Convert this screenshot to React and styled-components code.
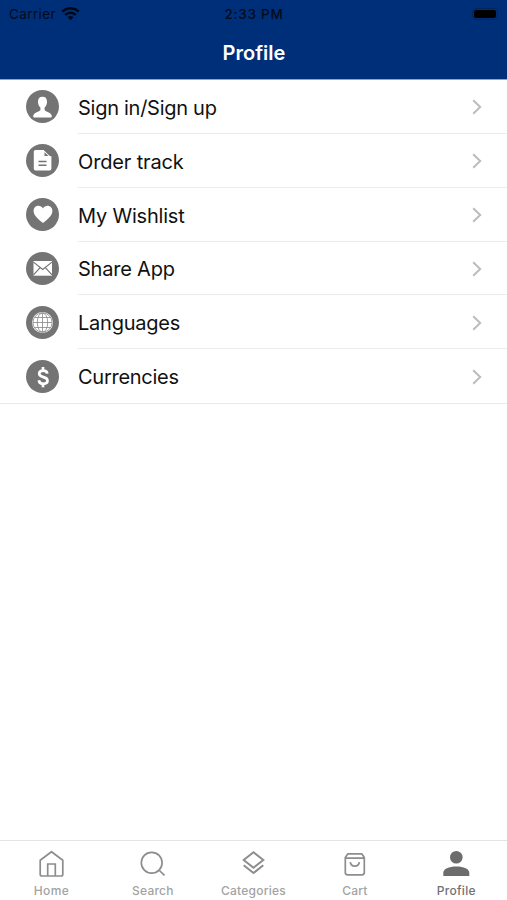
import React from 'react';
import styled, { createGlobalStyle } from 'styled-components';

const GlobalStyle = createGlobalStyle`
  * { box-sizing: border-box; }
  html, body { margin: 0; padding: 0; background: #fff; overflow: hidden; }
  body { font-family: Inter, "Liberation Sans", sans-serif; }
`;

const Screen = styled.div`
  display: flex;
  flex-direction: column;
  width: 100%;
  height: 100vh;
  background: #fff;
`;

const Header = styled.header`
  flex: none;
  height: 80px;
  background: #002f7a;
  border-bottom: 1px solid #8ba4c8;
`;

const StatusBar = styled.div`
  display: grid;
  grid-template-columns: 1fr auto 1fr;
  align-items: center;
  height: 28px;
  padding: 0 9px;
  color: #020b1c;
`;

const Carrier = styled.div`
  display: flex;
  align-items: center;
  gap: 5px;
  font-size: 13.5px;
  line-height: 28px;
  letter-spacing: 0.38px;
`;

const Clock = styled.div`
  font-size: 13.5px;
  font-weight: 500;
  line-height: 28px;
  letter-spacing: 0.72px;
  margin-right: -1px;
`;

const Battery = styled.div`
  justify-self: end;
  width: 26px;
  height: 12px;
  padding: 1px;
  margin-bottom: 1px;
  border: 1px solid #00255f;
  border-radius: 4px;
  &::before {
    content: '';
    display: block;
    width: 22px;
    height: 8px;
    border-radius: 2px;
    background: #000;
  }
`;

const Title = styled.h1`
  margin: 0;
  padding-left: 1px;
  height: 51px;
  line-height: 50px;
  text-align: center;
  color: #fff;
  font-size: 20px;
  font-weight: 600;
`;

const Menu = styled.ul`
  flex: 1;
  margin: 0;
  padding: 0;
  list-style: none;
`;

const MenuRow = styled.li`
  display: flex;
  height: 53.85px;
  padding-left: 26px;
  &:last-child { box-shadow: 0 1px 0 #e9e9e9; }
`;

const Badge = styled.svg`
  flex: none;
  align-self: center;
  width: 33px;
  height: 33px;
  margin-right: 19px;
`;

const RowBody = styled.div`
  flex: 1;
  display: flex;
  align-items: center;
  justify-content: space-between;
  padding: 2px 24px 0 0;
  border-bottom: 1px solid #ececec;
  li:last-child > & { border-color: transparent; }
`;

const RowLabel = styled.span`
  padding-top: 1px;
  color: #111;
  font-size: 20px;
  line-height: 24px;
  letter-spacing: ${(p) => p.$spacing}px;
  white-space: nowrap;
`;

const Chevron = styled.svg`
  width: 11px;
  height: 16px;
  fill: none;
  stroke: #bcbcbe;
  stroke-width: 2;
`;

const TabBar = styled.nav`
  flex: none;
  display: grid;
  grid-template-columns: repeat(5, 1fr);
  height: 60.5px;
  border-top: 1.5px solid #e4e4e4;
`;

const Tab = styled.div`
  display: flex;
  flex-direction: column;
  align-items: center;
  padding-top: 8px;
  color: ${(p) => (p.$active ? '#6c6c6c' : '#8d8d8d')};
`;

const TabIcon = styled.svg`
  width: 30px;
  height: 30px;
  fill: none;
  stroke: currentColor;
  stroke-width: 1.7;
`;

const TabLabel = styled.span`
  margin-top: 4px;
  padding-left: ${(p) => p.$shift || 0}px;
  color: ${(p) => (p.$active ? '#717171' : '#a3a3a3')};
  font-size: 12px;
  font-weight: 500;
  line-height: 16px;
  letter-spacing: ${(p) => p.$spacing}px;
`;

const glyphs = {
  person: (
    <path
      fill="#fff"
      d="M16.500 6.800c-3.100 0-4.600 1.900-4.500 5.100.1 2.500 1 4.300 2.400 5.500v2.700c-.3 1.500-5.600 2.200-7 5.100-.4.900-.2 2.200.6 2.200h17c.8 0 1-1.300.6-2.200-1.400-2.900-6.700-3.600-7-5.100v-2.700c1.400-1.200 2.300-3 2.400-5.500.1-3.200-1.400-5.100-4.500-5.100z"
    />
  ),
  document: (
    <>
      <path fill="#fff" d="M9.500 5.900h8.500v6.300h7.400v12.600q0 1.700-1.700 1.700H9.500q-1.700 0-1.700-1.700V7.600q0-1.700 1.700-1.700z" />
      <path fill="#fff" d="M17.500 5.900l7.900 7.600H17z" />
      <path fill="#747474" d="M18.500 8.200l4 3.900h-4z" />
      <path stroke="#747474" strokeWidth="1.400" d="M12.500 17.500h8M12.500 21.300h8" />
    </>
  ),
  heart: (
    <path
      fill="#fff"
      d="M17 25C13 21.800 7.600 17.600 7.600 12.900c0-3 2-5.100 4.700-5.100 2 0 3.800 1.100 4.700 2.700.9-1.600 2.500-2.700 4.500-2.700 2.700 0 4.900 2.100 4.900 5.100 0 4.700-5.400 8.900-9.400 12.100z"
    />
  ),
  mail: (
    <>
      <path fill="#fff" d="M7.500 9h18.500v14.700H7.500z" />
      <path
        fill="none"
        stroke="#747474"
        strokeWidth="1.200"
        d="M7.500 10.100l9.200 7.300 9.300-7.300M7.500 22.800l6.400-7M26 22.800l-6.400-7"
      />
    </>
  ),
  globe: (
    <>
      <circle cx="16.500" cy="16.500" r="10.500" fill="#fff" />
      <g fill="none" stroke="#868686" strokeWidth="0.800">
        <circle cx="16.500" cy="16.500" r="9.600" />
        <ellipse cx="16.500" cy="16.500" rx="5.200" ry="9.600" />
        <path d="M16.500 7v19M7 16.500h19M8.700 11.500h15.600M8.700 21.500h15.600" />
      </g>
    </>
  ),
  dollar: (
    <path
      fill="none"
      stroke="#fff"
      strokeWidth="2.700"
      d="M17 7v4M17 23.300v4M21.300 13.600c-.3-2-1.800-3-4.100-3-2.400 0-4 1.200-4 3.200 0 4.500 8.300 2.200 8.300 6.700 0 2-1.700 3.300-4.200 3.300s-4.200-1.300-4.500-3.500"
    />
  ),
};

const rows = [
  { icon: 'person', label: 'Sign in/Sign up', spacing: -0.27 },
  { icon: 'document', label: 'Order track', spacing: -0.15 },
  { icon: 'heart', label: 'My Wishlist', spacing: -0.2 },
  { icon: 'mail', label: 'Share App', spacing: -0.22 },
  { icon: 'globe', label: 'Languages', spacing: -0.24 },
  { icon: 'dollar', label: 'Currencies', spacing: -0.27 },
];

const tabs = [
  {
    label: 'Home',
    spacing: 0.32,
    shift: 1.5,
    icon: (
      <>
        <path d="M4.200 11.300 15.500 2.700l11.300 8.600v13.900q0 1.800-1.800 1.800H6q-1.800 0-1.800-1.800z" strokeLinejoin="round" />
        <path d="M11.700 27V15h7.600v12" />
      </>
    ),
  },
  {
    label: 'Search',
    spacing: 0.2,
    shift: 1.5,
    icon: (
      <>
        <circle cx="14.700" cy="13.700" r="10.400" />
        <path d="M21.900 21 27.500 26.300" />
      </>
    ),
  },
  {
    label: 'Categories',
    spacing: 0.25,
    icon: <path strokeWidth="2" d="M15.500 3.300 25.300 11l-9.800 7.700L5.700 11zM5.700 16.300l9.800 7.700 9.800-7.700" />,
  },
  {
    label: 'Cart',
    spacing: 0.2,
    icon: (
      <>
        <path d="M5.300 8.500 7.900 4.800h13.800l2.600 3.700v15q0 2.300-2.300 2.300H7.600q-2.300 0-2.300-2.300zM5.300 9.200h19" strokeLinejoin="round" />
        <path d="M10.300 13.200c.5 5.200 8.500 5.200 9 0" />
      </>
    ),
  },
  {
    label: 'Profile',
    spacing: 0.3,
    active: true,
    icon: (
      <g fill="currentColor" stroke="none">
        <circle cx="15.300" cy="8.300" r="6.300" />
        <path d="M2.300 27v-3c0-4.300 5.500-6.500 13-6.500s13 2.200 13 6.500v3z" />
      </g>
    ),
  },
];

function WifiIcon() {
  return (
    <svg width="19" height="14" viewBox="0 0 19 14" fill="none" stroke="#000814" strokeWidth="2.500">
      <path d="M1.200 4.600c4.800-4.500 11.800-4.500 16.600 0M4.200 7.800c3-2.900 7.600-2.900 10.600 0" />
      <path d="M6.600 10.200c1.700-1.500 4.100-1.500 5.800 0l-2.900 3z" fill="#000814" stroke="none" />
    </svg>
  );
}

export default function App() {
  return (
    <Screen>
      <GlobalStyle />
      <Header>
        <StatusBar>
          <Carrier>
            Carrier
            <WifiIcon />
          </Carrier>
          <Clock>2:33 PM</Clock>
          <Battery />
        </StatusBar>
        <Title>Profile</Title>
      </Header>
      <Menu>
        {rows.map((row) => (
          <MenuRow key={row.label}>
            <Badge viewBox="0 0 33 33">
              <circle cx="16.500" cy="16.500" r="16.500" fill="#747474" />
              {glyphs[row.icon]}
            </Badge>
            <RowBody>
              <RowLabel $spacing={row.spacing}>{row.label}</RowLabel>
              <Chevron viewBox="0 0 11 16">
                <path d="M1.200 1.300 8.200 8l-7 6.700" />
              </Chevron>
            </RowBody>
          </MenuRow>
        ))}
      </Menu>
      <TabBar>
        {tabs.map((tab) => (
          <Tab key={tab.label} $active={tab.active}>
            <TabIcon viewBox="0 0 30 30">{tab.icon}</TabIcon>
            <TabLabel $active={tab.active} $spacing={tab.spacing} $shift={tab.shift}>
              {tab.label}
            </TabLabel>
          </Tab>
        ))}
      </TabBar>
    </Screen>
  );
}
